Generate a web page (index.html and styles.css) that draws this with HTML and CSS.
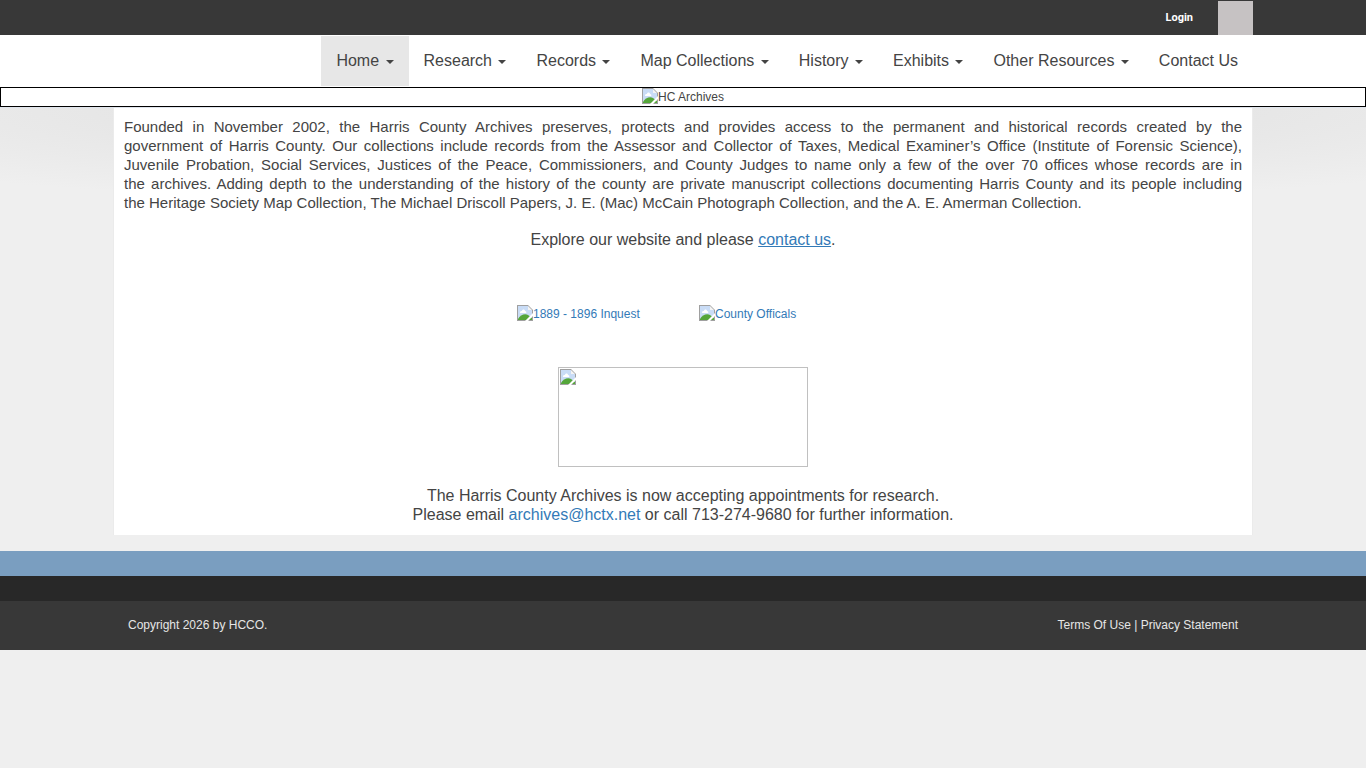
FILE: index.html
```html
<!DOCTYPE html>
<html lang="en">
<head>
	<meta charset="utf-8">
	<meta name="viewport" content="width=device-width, initial-scale=1">
	<title>Harris County Archives</title>
	<link rel="stylesheet" href="styles.css">
</head>
<body>
	<svg class="defs" width="0" height="0" aria-hidden="true">
		<symbol id="picture" viewBox="0 0 16 16">
			<path d="M0 0H11L16 5V16H0Z" fill="#a0a0a0"/>
			<path d="M1 1H11V5H15V15H1Z" fill="#c9dcf6"/>
			<path d="M3 8C3 6 4 6 5 6C5 4 8 4 8 6C9 6 10 7 9 8Z" fill="#fff"/>
			<path d="M1 15V14C3 10 8 8 11 10L15 13V15Z" fill="#55a63a"/>
			<path d="M11 1V5H15Z" fill="#f4f4f4"/>
			<path d="M16 8L8 16H11L16 11Z" fill="#fff"/>
		</symbol>
	</svg>

	<div class="topbar">
		<div class="container topbar-inner">
			<a class="login" href="#">Login</a>
			<div class="search-box"></div>
		</div>
	</div>

	<nav class="main-nav">
		<ul class="container menu">
			<li><a class="active" href="#">Home <span class="caret"></span></a></li>
			<li><a href="#">Research <span class="caret"></span></a></li>
			<li><a href="#">Records <span class="caret"></span></a></li>
			<li><a href="#">Map Collections <span class="caret"></span></a></li>
			<li><a href="#">History <span class="caret"></span></a></li>
			<li><a href="#">Exhibits <span class="caret"></span></a></li>
			<li><a href="#">Other Resources <span class="caret"></span></a></li>
			<li><a href="#">Contact Us</a></li>
		</ul>
	</nav>

	<div class="banner">
		<svg class="icon"><use href="#picture"/></svg><span>HC Archives</span>
	</div>

	<div class="page">
		<main class="container content">
			<p class="intro">Founded in November 2002, the Harris County Archives preserves, protects and provides access to the permanent and historical records created by the <br>
			government of Harris County. Our collections include records from the Assessor and Collector of Taxes, Medical Examiner’s Office (Institute of Forensic Science), <br>
			Juvenile Probation, Social Services, Justices of the Peace, Commissioners, and County Judges to name only a few of the over 70 offices whose records are in <br>
			the archives. Adding depth to the understanding of the history of the county are private manuscript collections documenting Harris County and its people including
			<span class="last-line">the Heritage Society Map Collection, The Michael Driscoll Papers, J. E. (Mac) McCain Photograph Collection, and the A. E. Amerman Collection.</span></p>
			<p>Explore our website and please <a class="underlined" href="#">contact us</a>.</p>
			<div class="features">
				<a href="#"><svg class="icon"><use href="#picture"/></svg><span>1889 - 1896 Inquest</span></a>
				<a href="#"><svg class="icon"><use href="#picture"/></svg><span>County Officals</span></a>
			</div>
			<div class="photo">
				<svg class="icon"><use href="#picture"/></svg>
			</div>
			<p>The Harris County Archives is now accepting appointments for research.<br>
			Please email <a href="mailto:archives@hctx.net">archives@hctx.net</a> or call 713-274-9680 for further information.</p>
		</main>
	</div>

	<div class="blue-strip"></div>
	<div class="dark-strip"></div>
	<footer class="footer">
		<div class="container footer-inner">
			<span>Copyright 2026 by HCCO.</span>
			<span><a href="#">Terms Of Use</a> | <a href="#">Privacy Statement</a></span>
		</div>
	</footer>
</body>
</html>
```
FILE: styles.css
```css
* {
	box-sizing: border-box;
}
body {
	margin: 0;
	background-color: #efefef;
	color: #444;
	font-family: "Liberation Sans", Arial, sans-serif;
	font-size: 12px;
	line-height: 18px;
}
a {
	color: #337ab7;
	text-decoration: none;
}
.defs {
	display: block;
}
.container {
	max-width: 1140px;
	margin: 0 auto;
}
.icon {
	width: 16px;
	height: 16px;
	flex: none;
}

/* top bar */
.topbar {
	background-color: #383838;
}
.topbar-inner {
	display: flex;
	justify-content: flex-end;
	gap: 25px;
	padding-top: 1px;
}
.login {
	color: #fff;
	font-family: Roboto, "Liberation Sans", sans-serif;
	font-size: 11px;
	font-weight: bold;
	line-height: 34px;
}
.search-box {
	width: 35px;
	height: 34px;
	background-color: #c6c2c3;
}

/* menu */
.main-nav {
	background-color: #fff;
	padding: 1px 0;
}
.menu {
	display: flex;
	flex-wrap: wrap;
	justify-content: flex-end;
	padding: 0;
	list-style: none;
}
.menu a {
	display: block;
	padding: 15px;
	color: #444;
	font-size: 16px;
	line-height: 20px;
}
.menu a.active {
	background-color: #e7e7e7;
}
.caret {
	display: inline-block;
	margin-left: 2px;
	vertical-align: middle;
	border-top: 4px solid #444;
	border-left: 4px solid transparent;
	border-right: 4px solid transparent;
}

.banner {
	display: flex;
	justify-content: center;
	background-color: #fff;
	border: 1px solid #000;
}

/* content */
.page {
	padding-bottom: 16px;
	border-top: 1px solid #dfe4ec;
	background: radial-gradient(ellipse 75% 100px at 50% 0, #dcdcdc, #efefef);
}
.content {
	padding: 9px 10px 11px;
	background-color: #fff;
	border: solid #ebebeb;
	border-width: 0 1px;
	font-size: 16px;
	line-height: 19px;
	text-align: center;
}
.content p {
	margin: 0 0 18px;
}
.content p:last-child {
	margin: 0;
}
.content .intro {
	font-size: 15px;
	text-align: justify;
	text-align-last: justify;
}
.last-line {
	display: block;
	text-align-last: left;
}
.underlined {
	text-decoration: underline;
}
.features {
	display: flex;
	justify-content: center;
	gap: 32px;
	margin: 56px 0 44px;
	font-size: 12px;
	line-height: 18px;
}
.features a {
	display: flex;
	width: 150px;
}
.photo {
	display: flex;
	max-width: 250px;
	height: 100px;
	margin: 0 auto 19px;
	padding: 1px;
	border: 1px solid #c0c0c0;
}

/* footer */
.blue-strip {
	height: 25px;
	background-color: #7a9ec0;
}
.dark-strip {
	height: 25px;
	background-color: #282828;
}
.footer {
	background-color: #383838;
	color: #e6e6e6;
}
.footer a {
	color: #e6e6e6;
}
.footer-inner {
	display: flex;
	justify-content: space-between;
	padding: 15px 15px 16px;
}

@media (max-width: 1139px) {
	.intro br {
		display: none;
	}
	.content .intro {
		text-align-last: auto;
	}
	.last-line {
		display: inline;
	}
}
```
